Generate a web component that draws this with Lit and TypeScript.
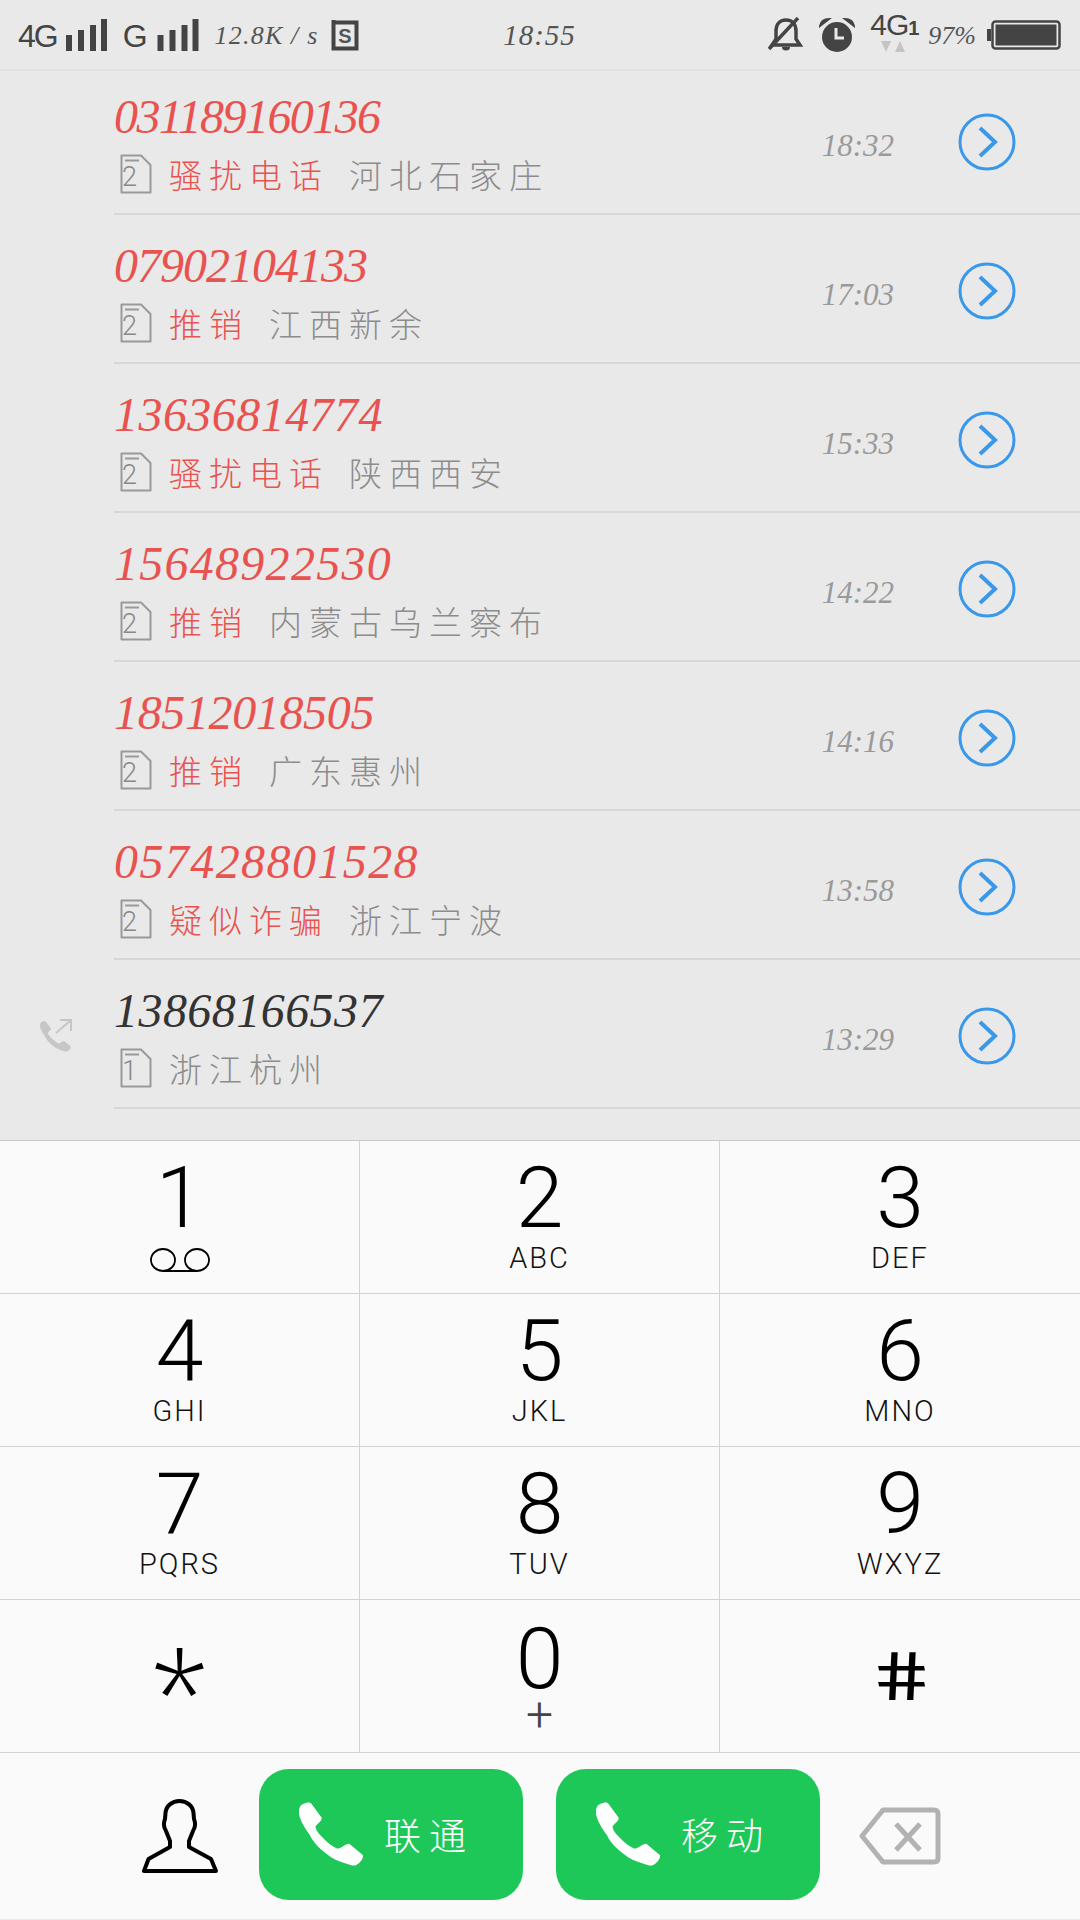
import { LitElement, html, css } from "lit";
import { customElement } from "lit/decorators.js";

interface Call { num: string; w: number; sim: string; tag?: string; loc: string; time: string; out?: boolean; }
const calls: Call[] = [
  { num: "031189160136", w: 269, sim: "2", tag: "骚扰电话", loc: "河北石家庄", time: "18:32" },
  { num: "07902104133", w: 253, sim: "2", tag: "推销", loc: "江西新余", time: "17:03" },
  { num: "13636814774", w: 269, sim: "2", tag: "骚扰电话", loc: "陕西西安", time: "15:33" },
  { num: "15648922530", w: 278, sim: "2", tag: "推销", loc: "内蒙古乌兰察布", time: "14:22" },
  { num: "18512018505", w: 260, sim: "2", tag: "推销", loc: "广东惠州", time: "14:16" },
  { num: "057428801528", w: 305, sim: "2", tag: "疑似诈骗", loc: "浙江宁波", time: "13:58" },
  { num: "13868166537", w: 269, sim: "1", loc: "浙江杭州", time: "13:29", out: true },
];
const keys = [
  ["1", ""], ["2", "ABC"], ["3", "DEF"],
  ["4", "GHI"], ["5", "JKL"], ["6", "MNO"],
  ["7", "PQRS"], ["8", "TUV"], ["9", "WXYZ"],
];

const handset = "M7.6 .7 C9.5 .2 11.5 .4 12.4 1.7 L22.7 15.7 C23 20 18 21 16.5 25 C17 29 21 33 24.8 36.7 C29 41 34 45 38.6 46.7 C43 46 46 42 50.3 41.7 L64 53.3 C64.5 56 62 60 59.2 61.7 C57 63.5 54.5 64 52.3 63.3 C45 61 38 59 31.7 55 C22 48 15 42 11 33.3 C5 25 1 18 0 11.7 C-.3 8 .5 5 2 3.3 C3.5 2 5.5 1.2 7.6 .7 Z";

const simIcon = (n: string) => html`<svg class="sim" width="32" height="40" viewBox="0 0 32 40">
  <path d="M1.5 1.5 H21 L30.5 11 V38.5 H1.5 Z" fill="none" stroke="#999" stroke-width="2" stroke-linejoin="round"/>
  <path d="M5 6.5 H19" stroke="#999" stroke-width="2"/>
  <text x="13" y="32" text-anchor="middle" font-family="Roboto" font-size="27" font-weight="300" fill="#888">${n}</text>
</svg>`;

const go = html`<svg width="58" height="58" viewBox="0 0 58 58">
  <circle cx="29" cy="29" r="27" fill="none" stroke="#3a98ea" stroke-width="3"/>
  <path d="M22 15 L37 29 L22 43" fill="none" stroke="#3a98ea" stroke-width="4"/>
</svg>`;

@customElement("app-root")
export class AppRoot extends LitElement {
  static styles = css`
    :host { display: block; width: 1080px; height: 1920px; overflow: hidden; background: #e9e9e9; font-family: "Liberation Serif", "Noto Sans CJK SC", serif; }
    .status { position: relative; z-index: 1; height: 69px; border-bottom: 2px solid #e2e2e2; display: grid; grid-template-columns: 1fr auto 1fr; align-items: center; padding: 0 19px 0 18px; color: #444; }
    .group { display: flex; align-items: center; }
    .group.right { justify-content: flex-end; }
    .net { font: 32px "Liberation Sans", sans-serif; letter-spacing: -2px; line-height: 40px; padding-top: 3px; }
    .net.g { margin-left: 16px; letter-spacing: 0; }
    .bars { margin-left: 9px; display: block; }
    .speed { font: italic 26px "Liberation Serif", serif; margin-left: 16px; letter-spacing: 1.2px; white-space: nowrap; padding-top: 2px; color: #555; }
    .simS { margin-left: 12px; display: block; }
    .clock { font: italic 29px "Liberation Serif", serif; color: #555; letter-spacing: 1px; padding-top: 2px; }
    .alarm { margin-left: 15px; display: block; }
    .lte { width: 50px; margin-left: 15px; position: relative; height: 40px; font: 30px/32px "Liberation Sans", sans-serif; letter-spacing: -1px; margin-top: -12px; white-space: nowrap; }
    .lte small { font-size: 20px; font-weight: 700; }
    .arrows { position: absolute; left: 11px; top: 32px; display: block; }
    .pct { font: italic 26px "Liberation Serif", serif; margin-left: 8px; color: #555; padding-top: 2px; }
    .batt { margin-left: 11px; display: block; }

    .list { margin-top: -5px; height: 1074px; }
    .row { height: 149px; display: flex; box-sizing: border-box; }
    .type { width: 114px; flex: none; display: flex; align-items: flex-start; justify-content: flex-end; padding: 58px 41px 0 0; box-sizing: border-box; }
    .body { flex: 1; display: flex; align-items: center; border-bottom: 2px solid #d7d7d7; box-sizing: border-box; min-width: 0; }
    .text { flex: 1; align-self: flex-start; display: flex; flex-direction: column; min-width: 0; padding-top: 23px; }
    .num { font: italic 48px/56px "Liberation Serif", serif; color: #333; height: 56px; white-space: nowrap; }
    .num.red { color: #e8524f; }
    .sub { display: flex; align-items: center; margin-left: 6px; margin-top: 7px; height: 44px; font: 300 33px/44px "Noto Sans CJK SC", sans-serif; letter-spacing: 7px; color: #8c8c8c; white-space: nowrap; }
    .sim { flex: none; display: block; }
    .tag { color: #e8524f; margin-left: 17px; margin-right: 20px; }
    .loc.plain { margin-left: 17px; }
    .time { font: italic 31px "Liberation Serif", serif; color: #9a9a9a; padding-top: 12px; margin-right: 64px; }
    .go { width: 58px; margin-right: 64px; display: block; padding-top: 8px; }

    .pad { display: grid; grid-template-columns: repeat(3, 1fr); background: #fafafa; border-top: 1px solid #c9c9c9; height: 612px; grid-auto-rows: 153px; box-sizing: border-box; }
    .key { border-right: 1px solid #d2d2d2; border-bottom: 1px solid #d2d2d2; box-sizing: border-box; display: flex; flex-direction: column; align-items: center; color: #000; padding-top: 17px; min-height: 0; }
    .key:nth-child(3n) { border-right: 0; }
    .d { font: 300 86px/80px Roboto, sans-serif; height: 80px; }
    .d.zero { margin-top: 2px; }
    .l { font: 300 29px/30px Roboto, sans-serif; letter-spacing: 2px; margin-top: 5px; color: #111; }
    .vm { margin-top: 10px; display: block; }
    .star { font: 150px/110px "Liberation Sans", sans-serif; height: 110px; margin-top: 26px; -webkit-text-stroke: 4px #fafafa; }
    .hash { font: 400 67px/80px Roboto, sans-serif; margin-top: 20px; transform: scaleX(1.35) skewX(9deg); }
    .plus { font: 300 48px/30px Roboto, sans-serif; margin-top: 1px; color: #444; }

    .bottom { height: 167px; background: #fafafa; border-top: 1px solid #c9c9c9; box-sizing: border-box; display: flex; align-items: center; padding: 0 0 4px 142px; }
    .person { width: 76px; display: block; margin: 4px 41px 0 0; }
    .dial { width: 264px; height: 131px; border-radius: 30px; background: #1ec858; display: flex; align-items: center; margin-right: 33px; color: #fff; font: 300 37px/44px "Noto Sans CJK SC", sans-serif; letter-spacing: 8px; box-sizing: border-box; padding-left: 40px; }
    .dial span { margin-left: 21px; }
    .back { margin: 4px 0 0 6px; display: block; }
  `;

  render() {
    return html`
      <div class="status">
        <div class="group">
          <span class="net">4G</span>
          <svg class="bars" width="41" height="32" viewBox="0 0 41 32"><path fill="#444" d="M0 16h6v16H0zM12 11h6v21h-6zM24 6h6v26h-6zM35 0h6v32h-6z"/></svg>
          <span class="net g">G</span>
          <svg class="bars" width="42" height="32" viewBox="0 0 41 32"><path fill="#444" d="M0 16h6v16H0zM12 11h6v21h-6zM24 6h6v26h-6zM35 0h6v32h-6z"/></svg>
          <span class="speed">12.8K / s</span>
          <svg class="simS" width="28" height="32" viewBox="0 0 28 32"><path d="M2.5 3.5H25.500V29.500H2.500V1" fill="none" stroke="#444" stroke-width="4"/><text x="14" y="24" text-anchor="middle" font-family="Liberation Sans" font-weight="700" font-size="20" fill="#555">S</text></svg>
        </div>
        <div class="clock">18:55</div>
        <div class="group right">
          <svg width="36" height="36" viewBox="0 0 36 36"><path d="M18 3C11 3 8 8 8 14V22L4 28H32L28 22V14C28 8 25 3 18 3Z" fill="none" stroke="#444" stroke-width="3.500"/><path d="M14 30a4 3.500 0 0 0 8 0Z" fill="#444"/><path d="M1 32L30 1" stroke="#444" stroke-width="3.500"/></svg>
          <svg class="alarm" width="36" height="34" viewBox="0 0 36 34"><circle cx="18" cy="19" r="15" fill="#444"/><path d="M17 10V20H25" fill="none" stroke="#e9e9e9" stroke-width="3"/><path d="M1 8C2 3 6 1 10 1L1 8ZM35 8C34 3 30 1 26 1L35 8Z" fill="#444" stroke="#444" stroke-width="2"/></svg>
          <div class="lte">4G<small>1</small>
            <svg class="arrows" width="26" height="11" viewBox="0 0 26 11"><path fill="#c4c4c4" d="M0 0h10L5 11ZM14 11h10L19 0Z"/></svg>
          </div>
          <span class="pct">97%</span>
          <svg class="batt" width="74" height="30" viewBox="0 0 74 30"><path fill="#444" d="M0 9h4v12H0z"/><rect x="5.500" y="1.500" width="67" height="27" rx="3" fill="none" stroke="#444" stroke-width="2.500"/><rect x="8.500" y="4.500" width="61" height="21" fill="#444"/></svg>
        </div>
      </div>

      <div class="list">
        ${calls.map((c) => html`
          <div class="row">
            <div class="type">${c.out ? html`<svg width="33" height="34" viewBox="0 0 33 34">
              <g transform="translate(0 3) scale(.48)"><path fill="#c6c6c6" d="${handset}"/></g>
              <path d="M16 15L31 2M20 2H31V13" fill="none" stroke="#c6c6c6" stroke-width="2"/></svg>` : ""}</div>
            <div class="body">
              <div class="text">
                <div class="num ${c.out ? "" : "red"}" style="letter-spacing:${(c.w / c.num.length - 24).toFixed(2)}px">${c.num}</div>
                <div class="sub">
                  ${simIcon(c.sim)}
                  ${c.tag ? html`<span class="tag">${c.tag}</span>` : ""}
                  <span class="loc ${c.tag ? "" : "plain"}">${c.loc}</span>
                </div>
              </div>
              <div class="time">${c.time}</div>
              <div class="go">${go}</div>
            </div>
          </div>`)}
      </div>

      <div class="pad">
        ${keys.map(([d, l]) => html`
          <div class="key">
            <div class="d">${d}</div>
            ${d === "1"
              ? html`<svg class="vm" width="60" height="24" viewBox="0 0 60 24"><ellipse cx="13" cy="12" rx="12" ry="11" fill="none" stroke="#000" stroke-width="1.800"/><ellipse cx="47" cy="12" rx="12" ry="11" fill="none" stroke="#000" stroke-width="1.800"/><path d="M13 23H47" stroke="#000" stroke-width="1.800"/></svg>`
              : html`<div class="l">${l}</div>`}
          </div>`)}
        <div class="key"><div class="star">*</div></div>
        <div class="key"><div class="d zero">0</div><div class="plus">+</div></div>
        <div class="key"><div class="hash">#</div></div>
      </div>

      <div class="bottom">
        <svg class="person" width="76" height="74" viewBox="0 0 76 74"><path d="M37.500 2C30 2 24 7 23.500 14L23 20C21 25 22 29 24 32L28 42V48L6.500 60L2 72H74L69 60L47 48V42L51 32C53 29 54 25 52 20L51.500 14C51 7 45 2 37.500 2Z" fill="none" stroke="#000" stroke-width="4" stroke-linejoin="round"/></svg>
        <div class="dial"><svg width="64" height="64" viewBox="0 0 64 64"><path fill="#fff" d="${handset}"/></svg><span>联通</span></div>
        <div class="dial"><svg width="64" height="64" viewBox="0 0 64 64"><path fill="#fff" d="${handset}"/></svg><span>移动</span></div>
        <svg class="back" width="82" height="58" viewBox="0 0 82 58"><path d="M24 3H75C78 3 79 4 79 7V51C79 54 78 55 75 55H24L3 29Z" fill="none" stroke="#b2b2b2" stroke-width="5" stroke-linejoin="round"/><path d="M37 17L61 43M61 17L37 43" stroke="#b2b2b2" stroke-width="5"/></svg>
      </div>
    `;
  }
}
